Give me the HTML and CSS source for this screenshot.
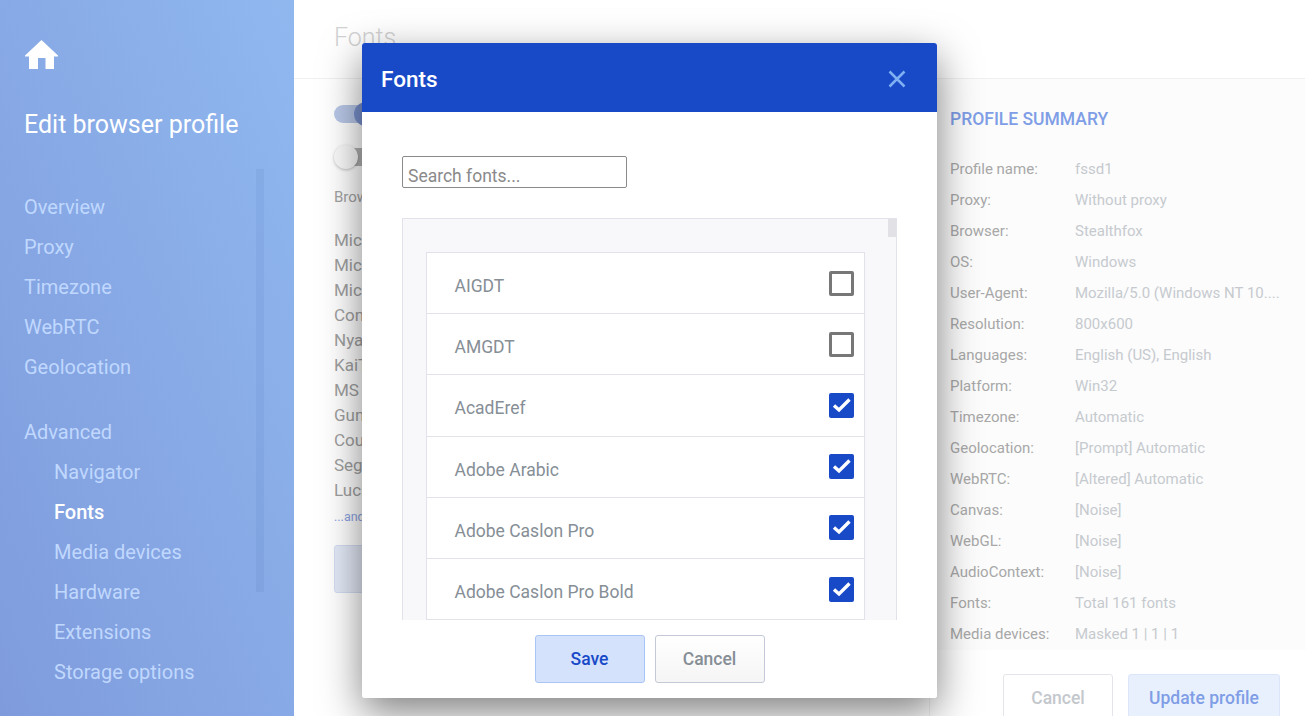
FILE: index.html
```html
<!DOCTYPE html>
<html>
    <head>
        <title>Edit browser profile</title>
        <meta charset="utf-8">
        <link rel="stylesheet" href="styles.css">
    </head>
    <body>
        <aside class="sidebar">
            <svg class="home-icon" viewBox="0 0 34 29" width="34" height="29">
                <path d="M17.5 0L34 15.5V16.5H30V29H21.5V18H14V29H5V16.5H1V15.5Z" fill="#fff"/>
            </svg>
            <h2 class="sidebar-title">Edit browser profile</h2>
            <div class="sidebar-scroll"></div>
            <nav class="nav">
                <a>Overview</a>
                <a>Proxy</a>
                <a>Timezone</a>
                <a>WebRTC</a>
                <a>Geolocation</a>
                <a class="nav-group">Advanced</a>
                <a class="nav-sub">Navigator</a>
                <a class="nav-sub active">Fonts</a>
                <a class="nav-sub">Media devices</a>
                <a class="nav-sub">Hardware</a>
                <a class="nav-sub">Extensions</a>
                <a class="nav-sub">Storage options</a>
            </nav>
        </aside>

        <main class="main">
            <header class="page-head">Fonts</header>
            <div class="page-body">
                <section class="fonts-col">
                    <div class="switch switch-on"><span class="knob"></span></div>
                    <div class="switch switch-off"><span class="knob"></span></div>
                    <p class="browser-note">Browser fonts</p>
                    <ul class="font-preview">
                        <li>Microsoft JhengHei</li>
                        <li>Microsoft YaHei</li>
                        <li>Microsoft Tai Le</li>
                        <li>Consolas</li>
                        <li>Nyala</li>
                        <li>KaiTi</li>
                        <li>MS Gothic</li>
                        <li>Gungsuh</li>
                        <li>Courier New</li>
                        <li>Segoe UI</li>
                        <li>Lucida Console</li>
                    </ul>
                    <a class="more-link">...and 150 more</a>
                    <button class="btn btn-faded">Edit fonts</button>
                </section>

                <section class="summary-col">
                    <div class="summary">
                        <h3 class="summary-title">PROFILE SUMMARY</h3>
                        <div class="summary-row"><span>Profile name:</span><span>fssd1</span></div>
                        <div class="summary-row"><span>Proxy:</span><span>Without proxy</span></div>
                        <div class="summary-row"><span>Browser:</span><span>Stealthfox</span></div>
                        <div class="summary-row"><span>OS:</span><span>Windows</span></div>
                        <div class="summary-row"><span>User-Agent:</span><span>Mozilla/5.0 (Windows NT 10....</span></div>
                        <div class="summary-row"><span>Resolution:</span><span>800x600</span></div>
                        <div class="summary-row"><span>Languages:</span><span>English (US), English</span></div>
                        <div class="summary-row"><span>Platform:</span><span>Win32</span></div>
                        <div class="summary-row"><span>Timezone:</span><span>Automatic</span></div>
                        <div class="summary-row"><span>Geolocation:</span><span>[Prompt] Automatic</span></div>
                        <div class="summary-row"><span>WebRTC:</span><span>[Altered] Automatic</span></div>
                        <div class="summary-row"><span>Canvas:</span><span>[Noise]</span></div>
                        <div class="summary-row"><span>WebGL:</span><span>[Noise]</span></div>
                        <div class="summary-row"><span>AudioContext:</span><span>[Noise]</span></div>
                        <div class="summary-row"><span>Fonts:</span><span>Total 161 fonts</span></div>
                        <div class="summary-row"><span>Media devices:</span><span>Masked 1 | 1 | 1</span></div>
                    </div>
                    <div class="page-actions">
                        <button class="btn btn-faded-cancel">Cancel</button>
                        <button class="btn btn-update">Update profile</button>
                    </div>
                </section>
            </div>
        </main>

        <div class="modal">
            <div class="modal-head">
                <span class="modal-title">Fonts</span>
                <svg class="modal-close" viewBox="0 0 18 18" width="18" height="18">
                    <path d="M1.5 1.5L16.5 16.5M16.5 1.5L1.5 16.5" stroke="#7fb0f2" stroke-width="2.5" fill="none"/>
                </svg>
            </div>
            <div class="modal-body">
                <input class="search" type="text" placeholder="Search fonts...">
                <div class="list-box">
                    <div class="thumb"></div>
                    <div class="list">
                        <label class="row"><span>AIGDT</span><i class="check"></i></label>
                        <label class="row"><span>AMGDT</span><i class="check"></i></label>
                        <label class="row"><span>AcadEref</span><i class="check checked"><svg viewBox="0 0 25 25"><path d="M5 12.5l5 4.5 10.5-10.5" stroke="#fff" stroke-width="3.4" fill="none"/></svg></i></label>
                        <label class="row"><span>Adobe Arabic</span><i class="check checked"><svg viewBox="0 0 25 25"><path d="M5 12.5l5 4.5 10.5-10.5" stroke="#fff" stroke-width="3.4" fill="none"/></svg></i></label>
                        <label class="row"><span>Adobe Caslon Pro</span><i class="check checked"><svg viewBox="0 0 25 25"><path d="M5 12.5l5 4.5 10.5-10.5" stroke="#fff" stroke-width="3.4" fill="none"/></svg></i></label>
                        <label class="row"><span>Adobe Caslon Pro Bold</span><i class="check checked"><svg viewBox="0 0 25 25"><path d="M5 12.5l5 4.5 10.5-10.5" stroke="#fff" stroke-width="3.4" fill="none"/></svg></i></label>
                    </div>
                </div>
            </div>
            <div class="modal-foot">
                <button class="btn btn-save">Save</button>
                <button class="btn btn-cancel">Cancel</button>
            </div>
        </div>
    </body>
</html>
```

FILE: styles.css
```css
* {
    box-sizing: border-box;
}
body {
    margin: 0;
    height: 716px;
    overflow: hidden;
    display: flex;
    background-color: #fff;
    font-family: Roboto, "Liberation Sans", sans-serif;
}

/* sidebar */
.sidebar {
    position: relative;
    width: 294px;
    flex: none;
    padding: 40px 0 0 24px;
    background: linear-gradient(to top right, #7f9bdc, #90b8ef);
}
.home-icon {
    display: block;
}
.sidebar-title {
    margin: 38px 0 0;
    font-size: 25px;
    line-height: 36px;
    font-weight: 400;
    color: #fff;
}
.sidebar-scroll {
    position: absolute;
    left: 256px;
    top: 169px;
    width: 8px;
    height: 423px;
    background-color: rgba(90, 125, 195, .15);
}
.nav {
    margin-top: 44px;
    display: flex;
    flex-direction: column;
}
.nav a {
    height: 40px;
    line-height: 40px;
    font-size: 20px;
    color: #c0d8fe;
}
.nav .nav-group {
    margin-top: 25px;
}
.nav .nav-sub {
    padding-left: 30px;
}
.nav .active {
    color: #fff;
    font-weight: 500;
}

/* page behind the modal */
.main {
    flex: 1;
    min-width: 0;
}
.page-head {
    height: 79px;
    padding: 20px 0 0 40px;
    font-size: 25px;
    line-height: 36px;
    font-weight: 300;
    color: #d2d2d2;
    border-bottom: 1px solid #f0f0f0;
}
.page-body {
    display: flex;
}
.fonts-col {
    flex: 1;
    min-width: 0;
    padding: 26px 0 0 40px;
    overflow: hidden;
}
.switch {
    position: relative;
    width: 46px;
    height: 18px;
    border-radius: 9px;
}
.switch-on {
    background-color: #b9c8e8;
}
.switch-off {
    margin: 25px 0 0 12px;
    background-color: #b5b5b5;
}
.knob {
    position: absolute;
    top: -3px;
    width: 24px;
    height: 24px;
    border-radius: 50%;
}
.switch-on .knob {
    left: 20px;
    background-color: #7b93cf;
}
.switch-off .knob {
    left: -12px;
    background-color: #fafafa;
    box-shadow: 0 1px 3px rgba(0, 0, 0, .25);
}
.browser-note {
    margin: 21px 0 0;
    font-size: 15px;
    line-height: 20px;
    color: #a3a3a3;
}
.font-preview {
    margin: 21px 0 0;
    padding: 0;
    list-style: none;
    font-size: 17px;
    line-height: 25px;
    color: #a0a0a0;
}
.more-link {
    display: block;
    margin-top: 6px;
    font-size: 12.5px;
    line-height: 16px;
    color: #8ba3e3;
}
.btn {
    width: 110px;
    height: 48px;
    padding: 0 0 1px;
    border-radius: 3px;
    font-family: inherit;
    font-size: 17.5px;
    font-weight: 500;
}
.btn-faded {
    display: block;
    margin-top: 20px;
    width: 150px;
    background-color: #e3e9f7;
    border: 1px solid #d3dcf2;
    color: #8ba3e3;
}
.summary-col {
    width: 376px;
    flex: none;
    border-left: 1px solid #f1f1f1;
}
.summary {
    height: 571px;
    padding: 29px 0 0 20px;
    background-color: #fcfcfc;
}
.summary-title {
    margin: 0 0 24px;
    font-size: 17.5px;
    line-height: 22px;
    font-weight: 500;
    color: #7f9ee6;
}
.summary-row {
    display: flex;
    height: 31px;
    line-height: 31px;
    font-size: 15px;
    color: #c6cacf;
}
.summary-row span:first-child {
    width: 125px;
    flex: none;
    color: #a8a8a8;
}
.page-actions {
    display: flex;
    justify-content: flex-end;
    gap: 15px;
    margin-top: 24px;
    padding-right: 25px;
}
.btn-faded-cancel {
    background-color: #fff;
    border: 1px solid #e4e4ea;
    color: #c4c8cd;
}
.btn-update {
    width: 152px;
    background-color: #e9f0fd;
    border: 1px solid #dbe6fb;
    color: #7f9ee6;
}

/* modal */
.modal {
    position: absolute;
    left: 362px;
    top: 43px;
    width: 575px;
    height: 655px;
    display: flex;
    flex-direction: column;
    background-color: #fff;
    border-radius: 3px;
    box-shadow: 0 14px 40px rgba(0, 0, 0, .5);
}
.modal-head {
    height: 69px;
    flex: none;
    padding: 0 31px 0 19px;
    display: flex;
    align-items: center;
    justify-content: space-between;
    background-color: #184ac8;
    border-radius: 3px 3px 0 0;
}
.modal-title {
    padding-top: 2px;
    font-size: 22.5px;
    font-weight: 500;
    color: #fff;
}
.modal-close {
    margin-top: 3px;
}
.modal-body {
    flex: 1;
    min-height: 0;
    padding: 44px 40px 0;
    overflow: hidden;
}
.search {
    display: block;
    width: 225px;
    height: 32px;
    padding: 7px 5px 0;
    border: 1px solid #8a8a8a;
    border-radius: 2px;
    outline: none;
    font-family: inherit;
    font-size: 17.5px;
}
.search::placeholder {
    color: #8a8a8a;
    opacity: 1;
}
.list-box {
    position: relative;
    margin-top: 30px;
    height: 440px;
    padding: 33px 31px 0 23px;
    background-color: #f8f8fa;
    border: 1px solid #e2e2ea;
}
.thumb {
    position: absolute;
    right: 0;
    top: 0;
    width: 8px;
    height: 18px;
    background-color: #e2e2e6;
}
.list {
    background-color: #fff;
    border: 1px solid #e2e2ea;
}
.row {
    height: 61.2px;
    padding: 0 10px 0 27.5px;
    display: flex;
    align-items: center;
    justify-content: space-between;
    border-bottom: 1px solid #e2e2ea;
    font-size: 17.5px;
    color: #868e96;
}
.row span {
    padding-top: 6px;
}
.check {
    display: block;
    width: 25px;
    height: 25px;
    border: 3px solid #777;
    border-radius: 2px;
}
.check.checked {
    border: none;
    background-color: #184ac8;
}
.check svg {
    display: block;
}
.modal-foot {
    height: 78px;
    flex: none;
    display: flex;
    justify-content: center;
    gap: 10px;
    padding-top: 15px;
    background-color: #fff;
    border-radius: 0 0 3px 3px;
}
.btn-save {
    background-color: #d5e2fc;
    border: 1px solid #a9c4f5;
    color: #184ac8;
}
.btn-cancel {
    background: linear-gradient(#fff, #f5f5f6);
    border: 1px solid #c3c9d6;
    color: #868e96;
}
```
